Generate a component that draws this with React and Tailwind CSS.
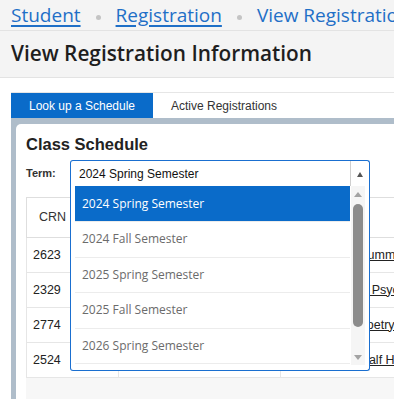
import React from "react";

const sans = { fontFamily: '"Open Sans", "Noto Sans", sans-serif' };

const options = [
  "2024 Spring Semester",
  "2024 Fall Semester",
  "2025 Spring Semester",
  "2025 Fall Semester",
  "2026 Spring Semester",
  "2026 Fall Semester",
];

const rows = [
  { crn: "2623", subj: "LIT 210", title: "Literature of Summer Fiction" },
  { crn: "2329", subj: "PSY 101", title: "Introduction to Psychology" },
  { crn: "2774", subj: "ENG 240", title: "Elements of Poetry" },
  { crn: "2524", subj: "HIS 330", title: "The Second Half History" },
];

export default function App() {
  return (
    <div className="w-[404px] h-[399px] bg-white overflow-hidden">
      <div className="w-[394px] h-[399px] overflow-hidden">
        {/* breadcrumb */}
        <div
          className="h-[31px] bg-[#f4f4f4] border-b border-[#e3e3e3] flex items-center pl-[11px] whitespace-nowrap text-[19px] leading-none text-[#1f6fc7] font-['Open_Sans',sans-serif]"
        >
          <span className="underline underline-offset-[3px] decoration-[1.5px]">Student</span>
          <span className="mx-[15px] w-[5px] h-[5px] rounded-full bg-[#c4c4c4] mt-[5px] shrink-0"></span>
          <span className="underline underline-offset-[3px] decoration-[1.5px]">Registration</span>
          <span className="mx-[15px] w-[5px] h-[5px] rounded-full bg-[#c4c4c4] mt-[5px] shrink-0"></span>
          <span>View Registration Information</span>
        </div>
        {/* title */}
        <div className="h-[47px] bg-[#f4f4f4] border-b border-[#e3e3e3] flex items-center pl-[11px] whitespace-nowrap text-[20.8px] font-semibold text-[#1e1e1e] font-['Open_Sans',sans-serif]">
          View Registration Information
        </div>
        {/* content */}
        <div className="pl-[11px] pt-[14px]">
          <div className="w-[520px] border-t border-[#e6e6e6] flex h-[26px] font-['Liberation_Sans',Arial,sans-serif] text-[12px]">
            <div className="w-[142px] bg-[#0a6bc9] text-white flex items-center justify-center">
              Look up a Schedule
            </div>
            <div className="w-[142px] text-[#333] flex items-center justify-center">
              Active Registrations
            </div>
          </div>
          <div className="w-[520px] bg-[#afbdca] pl-[5px] pt-[6px] h-[300px]">
            <div className="bg-white rounded-tl-[5px] pl-[10px] pt-[11px] h-full font-['Liberation_Sans',Arial,sans-serif]">
              <div className="text-[16.5px] leading-[19px] font-bold text-[#222]">Class Schedule</div>
              <div className="flex items-center mt-[6px] h-[26px]">
                <div className="w-[44px] text-[11px] font-bold text-[#333]">Term:</div>
                <div className="relative z-10 w-[300px] h-[26px] border border-b-0 border-[#1a6fd0] rounded-t-[3px] bg-white flex items-center">
                  <div className="flex-1 pl-[8px] text-[12px] text-[#111]">2024 Spring Semester</div>
                  <div className="w-[19px] h-full border-l border-[#cfcfcf] flex items-center justify-center">
                    <svg width="6" height="5" viewBox="0 0 6 5" className="mt-[1px]">
                      <path d="M3 0 L6 5 L0 5 Z" fill="#555" />
                    </svg>
                  </div>
                  {/* dropdown list */}
                  <div className="absolute left-[-1px] top-[25px] w-[300px] h-[185px] bg-white border border-t-0 border-[#1a6fd0] rounded-b-[3px] overflow-hidden" style={sans}>
                    <div className="pl-[4px] pr-[19px]">
                      {options.map((o, i) => (
                        <div
                          key={o}
                          className={
                            i === 0
                              ? "h-[35px] bg-[#0a6bc9] text-white text-[12px] flex items-center pl-[7px] whitespace-nowrap"
                              : "h-[35.5px] border-t border-[#ececec] text-[#6b6b6b] text-[12px] flex items-center pl-[7px] whitespace-nowrap"
                          }
                        >
                          {o}
                        </div>
                      ))}
                    </div>
                    {/* scrollbar */}
                    <div className="absolute right-[4px] top-0 w-[14px] h-[179px] bg-[#f5f5f5] flex flex-col items-center">
                      <svg width="8" height="5" viewBox="0 0 8 5" className="mt-[6px]">
                        <path d="M4 0 L8 5 L0 5 Z" fill="#a3a3a3" />
                      </svg>
                      <div className="mt-[7px] w-[10px] h-[123px] rounded-full bg-[#8c8c8c]"></div>
                      <div className="flex-1"></div>
                      <svg width="8" height="5" viewBox="0 0 8 5" className="mb-[5px]">
                        <path d="M0 0 L8 0 L4 5 Z" fill="#a3a3a3" />
                      </svg>
                    </div>
                  </div>
                </div>
              </div>
              {/* table */}
              <div className="mt-[11px] w-[490px] bg-[#f7f7f7] h-[240px]">
                <table className="w-full border-collapse bg-white text-[12.5px] text-[#222]">
                  <colgroup>
                    <col className="w-[92px]" />
                    <col className="w-[162px]" />
                    <col />
                  </colgroup>
                  <thead>
                    <tr className="h-[40px]">
                      <th className="border border-[#dedede] text-left font-normal pl-[12px] text-[#333]">CRN</th>
                      <th className="border border-[#dedede] text-left font-normal pl-[10px] text-[#333]">Subject</th>
                      <th className="border border-[#dedede] text-left font-normal pl-[10px] text-[#333]">Title</th>
                    </tr>
                  </thead>
                  <tbody>
                    {rows.map((r) => (
                      <tr key={r.crn} className="h-[35px]">
                        <td className="border border-[#e6e6e6] pl-[6px]">{r.crn}</td>
                        <td className="border border-[#e6e6e6] pl-[10px]">{r.subj}</td>
                        <td className="border border-[#e6e6e6] pl-[8px] whitespace-nowrap">
                          <span className="underline">{r.title}</span>
                        </td>
                      </tr>
                    ))}
                  </tbody>
                </table>
              </div>
            </div>
          </div>
        </div>
      </div>
    </div>
  );
}
